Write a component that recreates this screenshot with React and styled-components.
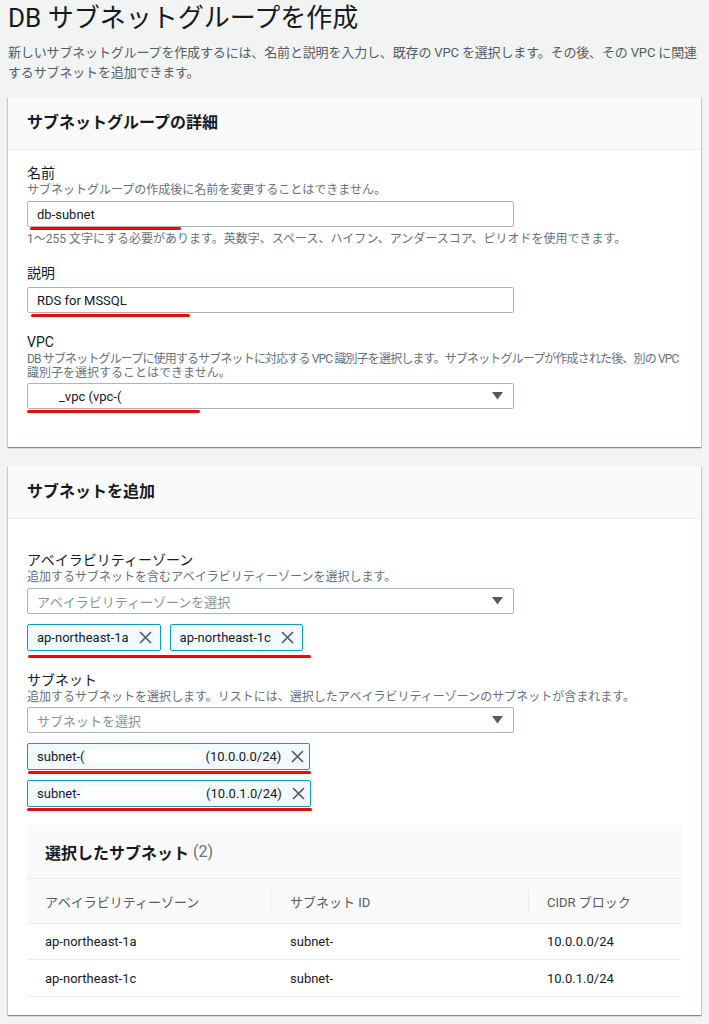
import styled, { createGlobalStyle } from "styled-components";

const GlobalStyle = createGlobalStyle`
  body {
    margin: 0;
    background: #f2f3f3;
    font-family: Roboto, "Noto Sans CJK JP", "Noto Sans", sans-serif;
    color: #16191f;
  }
  * { box-sizing: border-box; }
`;

const Page = styled.div`
  padding: 0 8px 8px;
`;

const Title = styled.h1`
  margin: 0;
  font-size: 26px;
  font-weight: 400;
  line-height: 36px;
`;

const Intro = styled.p`
  margin: 7px 0 14px;
  font-size: 13px;
  line-height: 20px;
  color: #545b64;
  letter-spacing: -0.15px;
  white-space: nowrap;
`;

const Panel = styled.section`
  background: #fff;
  margin-bottom: 19px;
  box-shadow: 0 1px 1px 0 rgba(0, 28, 36, 0.3), 1px 1px 1px 0 rgba(0, 28, 36, 0.15),
    -1px 1px 1px 0 rgba(0, 28, 36, 0.15);
`;

const PanelHeader = styled.div`
  height: 53px;
  background: #fafafa;
  border-bottom: 1px solid #eaeded;
  padding: 0 19px;
  display: flex;
  align-items: center;
  h2 {
    margin: 0;
    font-size: 16px;
    font-weight: 700;
    line-height: 20px;
  }
`;

const PanelBody = styled.div`
  padding: ${(p) => p.$top}px 19px ${(p) => p.$bottom}px;
`;

const Field = styled.div`
  margin-top: ${(p) => p.$mt || 0}px;
`;

const Label = styled.div`
  font-size: 14px;
  line-height: 20px;
`;

const Hint = styled.div`
  font-size: 12px;
  line-height: 14px;
  color: #687078;
  white-space: nowrap;
  letter-spacing: ${(p) => (p.$tight ? "-0.85px" : "0")};
  margin-top: ${(p) => p.$mt || 0}px;
`;

const Control = styled.div`
  position: relative;
  width: 487px;
  height: 26px;
  margin-top: ${(p) => p.$mt || 0}px;
  border: 1px solid #aab7b8;
  border-radius: 2px;
  background: #fff;
  padding: 0 10px 0 9px;
  display: flex;
  align-items: center;
  font-size: 13px;
  white-space: nowrap;
  color: ${(p) => (p.$placeholder ? "#879596" : "#16191f")};
  span.grow {
    flex: 1;
  }
`;

const Blank = styled.span`
  flex: none;
  display: inline-block;
  width: ${(p) => p.$w}px;
  height: 13px;
  border-radius: 7px;
  background: #fff;
  margin: 0 ${(p) => p.$mr || 0}px 0 0;
`;

const RedMark = styled.div`
  position: absolute;
  left: ${(p) => p.$left}px;
  top: calc(100% + ${(p) => p.$gap}px);
  width: ${(p) => p.$width}px;
  height: 3px;
  border-radius: 2px;
  background: #f00;
`;

const TokenRow = styled.div`
  position: relative;
  display: flex;
  gap: 9px;
  margin-top: ${(p) => p.$mt || 0}px;
`;

const TokenColumn = styled.div`
  display: flex;
  flex-direction: column;
  gap: 10px;
  margin-top: ${(p) => p.$mt || 0}px;
`;

const Token = styled.div`
  position: relative;
  height: 27px;
  width: ${(p) => (p.$width ? `${p.$width}px` : "auto")};
  border: 1px solid #00a1c9;
  border-radius: 2px;
  background: #f1faff;
  padding: 0 8px 0 9px;
  display: flex;
  align-items: center;
  font-size: 13px;
  white-space: nowrap;
  color: #16191f;
  span.grow {
    flex: 1;
  }
  svg {
    margin-left: 10px;
    flex: none;
  }
`;

const Table = styled.div`
  margin-top: 18px;
  width: 655px;
`;

const TableHeading = styled.div`
  height: 54px;
  background: #fafafa;
  border-bottom: 1px solid #eaeded;
  padding: 0 18px;
  display: flex;
  align-items: center;
  font-size: 16px;
  font-weight: 700;
  span {
    margin-left: 4px;
    font-weight: 400;
    color: #687078;
  }
`;

const Row = styled.div`
  display: grid;
  grid-template-columns: 243px 258px 154px;
  height: ${(p) => p.$h}px;
  background: ${(p) => (p.$head ? "#fafafa" : "#fff")};
  border-bottom: 1px solid #eaeded;
`;

const Cell = styled.div`
  position: relative;
  display: flex;
  align-items: center;
  padding-left: ${(p) => p.$pl}px;
  font-size: 13px;
  color: ${(p) => (p.$head ? "#545b64" : "#16191f")};
  &::before {
    content: "";
    display: ${(p) => (p.$divider ? "block" : "none")};
    position: absolute;
    left: 0;
    top: 11px;
    bottom: 11px;
    width: 1px;
    background: #eaeded;
  }
`;

const Caret = () => (
  <svg width="11" height="8" viewBox="0 0 11 8">
    <polygon points="0,0 11,0 5.5,7.5" fill="#545b64" />
  </svg>
);

const Close = () => (
  <svg width="13" height="13" viewBox="0 0 13 13">
    <path d="M1 1 L12 12 M12 1 L1 12" stroke="#545b64" strokeWidth="1.7" fill="none" />
  </svg>
);

const subnets = [
  { az: "ap-northeast-1a", id: "subnet-", cidr: "10.0.0.0/24" },
  { az: "ap-northeast-1c", id: "subnet-", cidr: "10.0.1.0/24" },
];

export default function App() {
  return (
    <Page>
      <GlobalStyle />
      <Title>DB サブネットグループを作成</Title>
      <Intro>
        新しいサブネットグループを作成するには、名前と説明を入力し、既存の VPC を選択します。その後、その VPC に関連
        <br />
        するサブネットを追加できます。
      </Intro>

      <Panel>
        <PanelHeader>
          <h2>サブネットグループの詳細</h2>
        </PanelHeader>
        <PanelBody $top={13} $bottom={38}>
          <Field>
            <Label>名前</Label>
            <Hint>サブネットグループの作成後に名前を変更することはできません。</Hint>
            <Control $mt={4}>
              db-subnet
              <RedMark $left={2} $width={151} $gap={1} />
            </Control>
            <Hint $mt={5}>
              1～255 文字にする必要があります。英数字、スペース、ハイフン、アンダースコア、ピリオドを使用できます。
            </Hint>
          </Field>
          <Field $mt={17}>
            <Label>説明</Label>
            <Control $mt={4}>
              RDS for MSSQL
              <RedMark $left={3} $width={159} $gap={2} />
            </Control>
          </Field>
          <Field $mt={19}>
            <Label>VPC</Label>
            <Hint $tight>
              DB サブネットグループに使用するサブネットに対応する VPC 識別子を選択します。サブネットグループが作成された後、別の VPC
            </Hint>
            <Hint>識別子を選択することはできません。</Hint>
            <Control $mt={3}>
              <Blank $w={22} />
              <span className="grow">_vpc (vpc-(</span>
              <Caret />
              <RedMark $left={-1} $width={173} $gap={2} />
            </Control>
          </Field>
        </PanelBody>
      </Panel>

      <Panel>
        <PanelHeader>
          <h2>サブネットを追加</h2>
        </PanelHeader>
        <PanelBody $top={31} $bottom={18}>
          <Field>
            <Label>アベイラビリティーゾーン</Label>
            <Hint>追加するサブネットを含むアベイラビリティーゾーンを選択します。</Hint>
            <Control $mt={4} $placeholder>
              <span className="grow">アベイラビリティーゾーンを選択</span>
              <Caret />
            </Control>
            <TokenRow $mt={10}>
              <Token>
                ap-northeast-1a
                <Close />
              </Token>
              <Token>
                ap-northeast-1c
                <Close />
              </Token>
              <RedMark $left={1} $width={283} $gap={4} />
            </TokenRow>
          </Field>
          <Field $mt={19}>
            <Label>サブネット</Label>
            <Hint>追加するサブネットを選択します。リストには、選択したアベイラビリティーゾーンのサブネットが含まれます。</Hint>
            <Control $mt={3} $placeholder>
              <span className="grow">サブネットを選択</span>
              <Caret />
            </Control>
            <TokenColumn $mt={10}>
              <Token $width={283}>
                subnet-(
                <Blank $w={118} $mr={3} />
                <span className="grow">(10.0.0.0/24)</span>
                <Close />
                <RedMark $left={0} $width={283} $gap={2} />
              </Token>
              <Token $width={284}>
                subnet-
                <Blank $w={122} $mr={4} />
                <span className="grow">(10.0.1.0/24)</span>
                <Close />
                <RedMark $left={-1} $width={285} $gap={2} />
              </Token>
            </TokenColumn>
          </Field>

          <Table>
            <TableHeading>
              選択したサブネット<span>(2)</span>
            </TableHeading>
            <Row $head $h={45}>
              <Cell $head $pl={18}>アベイラビリティーゾーン</Cell>
              <Cell $head $pl={20} $divider>サブネット ID</Cell>
              <Cell $head $pl={19} $divider>CIDR ブロック</Cell>
            </Row>
            {subnets.map((s, i) => (
              <Row key={s.az} $h={i === 0 ? 36 : 37}>
                <Cell $pl={18}>{s.az}</Cell>
                <Cell $pl={20}>{s.id}</Cell>
                <Cell $pl={19}>{s.cidr}</Cell>
              </Row>
            ))}
          </Table>
        </PanelBody>
      </Panel>
    </Page>
  );
}
